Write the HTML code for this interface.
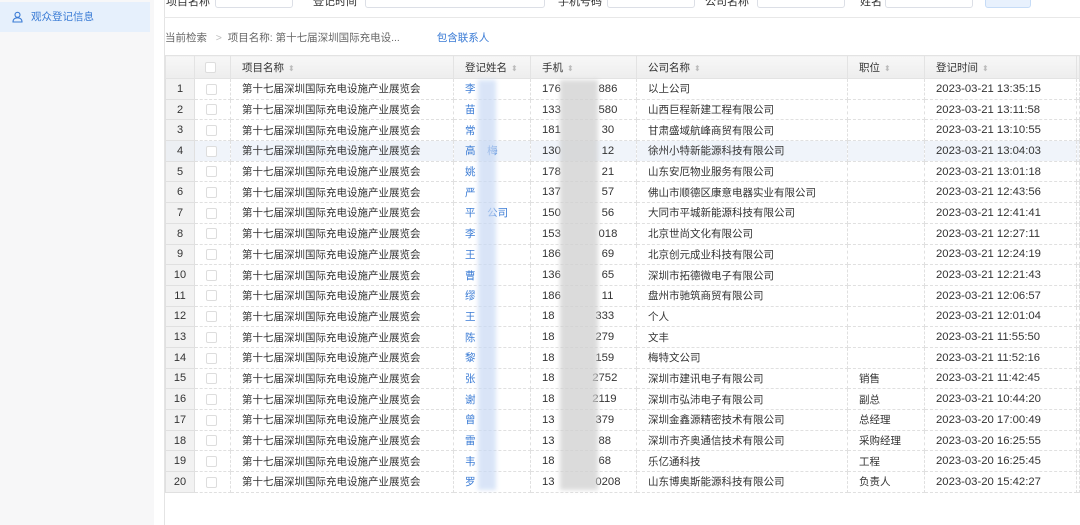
<!DOCTYPE html>
<html><head><meta charset="utf-8"><style>
*{margin:0;padding:0;box-sizing:border-box}
body{width:1080px;height:525px;overflow:hidden;background:#fff;font-family:"Liberation Sans","Noto Sans CJK SC",sans-serif;font-size:11px;color:#333;position:relative}
.side{position:absolute;left:0;top:0;width:154px;height:525px;background:#f7f7f8}
.act{position:absolute;left:0;top:2px;width:150px;height:30px;background:#e6f0fc;color:#3a7bd5;font-size:10.5px;line-height:30px;padding-left:31px}
.vl{position:absolute;left:164px;top:0;width:1px;height:525px;background:#e4e4e4}
.topline{position:absolute;left:164px;top:17px;width:916px;height:1px;background:#e8e8e8}
.inp{position:absolute;top:-8px;height:16px;border:1px solid #dcdfe6;border-radius:3px;background:#fff}
.lab{position:absolute;top:-7px;font-size:11px;color:#333}
.crumb{position:absolute;top:30px;left:165px;font-size:10.5px;color:#666}
table{position:absolute;left:165px;top:55px;border-collapse:collapse;table-layout:fixed;width:915px}
td,th{border:1px dashed #e0e0e0;height:20.7px;white-space:nowrap;overflow:hidden;font-weight:normal;text-align:left;padding-left:11px;font-size:10.5px}
th{height:23px;background:linear-gradient(#f7f7f7,#ededed);color:#333;border:1px solid #e3e3e3}
td.n{background:#f2f2f2;text-align:center;padding:0;border-style:solid;font-size:11px}
.cb{display:inline-block;width:11px;height:11px;border:1px solid #ddd;border-radius:2px;background:#fff;vertical-align:middle}
.s{color:#bbb;font-size:8px;margin-left:4px}
.b{color:#3a7bd5}
.d{font-size:11.3px}
tr.h td{background:#f0f4fa}
tr.h td.n{background:#eceff3}
.bl{position:absolute;background:#d0d0d0;opacity:.75;filter:blur(2px)}
.bb{position:absolute;background:#c9daf5;opacity:.7;filter:blur(2px)}
</style></head><body>
<div class="side"><div class="act"><svg style="position:absolute;left:12px;top:9px" width="12" height="12" viewBox="0 0 12 12" fill="none" stroke="#3a7bd5" stroke-width="1.1"><circle cx="5.5" cy="3.8" r="2.5"/><path d="M1 11c0-2.8 2-4.2 4.5-4.2S10 8.2 10 11z"/></svg>观众登记信息</div></div>
<div class="vl"></div><div class="topline"></div>
<div class="lab" style="left:166px">项目名称</div><div class="inp" style="left:215px;width:78px"></div>
<div class="lab" style="left:313px">登记时间</div><div class="inp" style="left:365px;width:180px"></div>
<div class="lab" style="left:558px">手机号码</div><div class="inp" style="left:607px;width:88px"></div>
<div class="lab" style="left:705px">公司名称</div><div class="inp" style="left:757px;width:88px"></div>
<div class="lab" style="left:860px">姓名</div><div class="inp" style="left:885px;width:88px"></div>
<div class="inp" style="left:985px;width:46px;background:#e8f1fd;border-color:#c6dcf7"></div>
<div class="crumb">当前检索 &nbsp;&nbsp;<span style="color:#bbb">&gt;</span>&nbsp;&nbsp;项目名称: 第十七届深圳国际充电设... <span class="b" style="margin-left:34px">包含联系人</span></div>
<table>
<colgroup><col style="width:29px"><col style="width:36px"><col style="width:223px"><col style="width:77px"><col style="width:106px"><col style="width:211px"><col style="width:77px"><col style="width:152px"><col></colgroup>
<tr><th style="border-right:none"></th><th style="padding-left:10px"><span class="cb"></span></th><th>项目名称<span class="s">⬍</span></th><th>登记姓名<span class="s">⬍</span></th><th>手机<span class="s">⬍</span></th><th>公司名称<span class="s">⬍</span></th><th>职位<span class="s">⬍</span></th><th>登记时间<span class="s">⬍</span></th><th></th></tr>
<tr><td class="n">1</td><td><span class="cb"></span></td><td>第十七届深圳国际充电设施产业展览会</td><td class="b">李</td><td class="d">176&nbsp;&nbsp;&nbsp;&nbsp;&nbsp;&nbsp;&nbsp;&nbsp;&nbsp;&nbsp;&nbsp;&nbsp;886</td><td>以上公司</td><td></td><td class="d">2023-03-21 13:35:15</td><td></td></tr>
<tr><td class="n">2</td><td><span class="cb"></span></td><td>第十七届深圳国际充电设施产业展览会</td><td class="b">苗</td><td class="d">133&nbsp;&nbsp;&nbsp;&nbsp;&nbsp;&nbsp;&nbsp;&nbsp;&nbsp;&nbsp;&nbsp;&nbsp;580</td><td>山西巨程新建工程有限公司</td><td></td><td class="d">2023-03-21 13:11:58</td><td></td></tr>
<tr><td class="n">3</td><td><span class="cb"></span></td><td>第十七届深圳国际充电设施产业展览会</td><td class="b">常</td><td class="d">181&nbsp;&nbsp;&nbsp;&nbsp;&nbsp;&nbsp;&nbsp;&nbsp;&nbsp;&nbsp;&nbsp;&nbsp;&nbsp;30</td><td>甘肃盛域航峰商贸有限公司</td><td></td><td class="d">2023-03-21 13:10:55</td><td></td></tr>
<tr class="h"><td class="n">4</td><td><span class="cb"></span></td><td>第十七届深圳国际充电设施产业展览会</td><td class="b">高&nbsp;&nbsp;&nbsp;&nbsp;梅</td><td class="d">130&nbsp;&nbsp;&nbsp;&nbsp;&nbsp;&nbsp;&nbsp;&nbsp;&nbsp;&nbsp;&nbsp;&nbsp;&nbsp;12</td><td>徐州小特新能源科技有限公司</td><td></td><td class="d">2023-03-21 13:04:03</td><td></td></tr>
<tr><td class="n">5</td><td><span class="cb"></span></td><td>第十七届深圳国际充电设施产业展览会</td><td class="b">姚</td><td class="d">178&nbsp;&nbsp;&nbsp;&nbsp;&nbsp;&nbsp;&nbsp;&nbsp;&nbsp;&nbsp;&nbsp;&nbsp;&nbsp;21</td><td>山东安厄物业服务有限公司</td><td></td><td class="d">2023-03-21 13:01:18</td><td></td></tr>
<tr><td class="n">6</td><td><span class="cb"></span></td><td>第十七届深圳国际充电设施产业展览会</td><td class="b">严</td><td class="d">137&nbsp;&nbsp;&nbsp;&nbsp;&nbsp;&nbsp;&nbsp;&nbsp;&nbsp;&nbsp;&nbsp;&nbsp;&nbsp;57</td><td>佛山市顺德区康意电器实业有限公司</td><td></td><td class="d">2023-03-21 12:43:56</td><td></td></tr>
<tr><td class="n">7</td><td><span class="cb"></span></td><td>第十七届深圳国际充电设施产业展览会</td><td class="b">平&nbsp;&nbsp;&nbsp;&nbsp;公司</td><td class="d">150&nbsp;&nbsp;&nbsp;&nbsp;&nbsp;&nbsp;&nbsp;&nbsp;&nbsp;&nbsp;&nbsp;&nbsp;&nbsp;56</td><td>大同市平城新能源科技有限公司</td><td></td><td class="d">2023-03-21 12:41:41</td><td></td></tr>
<tr><td class="n">8</td><td><span class="cb"></span></td><td>第十七届深圳国际充电设施产业展览会</td><td class="b">李</td><td class="d">153&nbsp;&nbsp;&nbsp;&nbsp;&nbsp;&nbsp;&nbsp;&nbsp;&nbsp;&nbsp;&nbsp;&nbsp;018</td><td>北京世尚文化有限公司</td><td></td><td class="d">2023-03-21 12:27:11</td><td></td></tr>
<tr><td class="n">9</td><td><span class="cb"></span></td><td>第十七届深圳国际充电设施产业展览会</td><td class="b">王</td><td class="d">186&nbsp;&nbsp;&nbsp;&nbsp;&nbsp;&nbsp;&nbsp;&nbsp;&nbsp;&nbsp;&nbsp;&nbsp;&nbsp;69</td><td>北京创元成业科技有限公司</td><td></td><td class="d">2023-03-21 12:24:19</td><td></td></tr>
<tr><td class="n">10</td><td><span class="cb"></span></td><td>第十七届深圳国际充电设施产业展览会</td><td class="b">曹</td><td class="d">136&nbsp;&nbsp;&nbsp;&nbsp;&nbsp;&nbsp;&nbsp;&nbsp;&nbsp;&nbsp;&nbsp;&nbsp;&nbsp;65</td><td>深圳市拓德微电子有限公司</td><td></td><td class="d">2023-03-21 12:21:43</td><td></td></tr>
<tr><td class="n">11</td><td><span class="cb"></span></td><td>第十七届深圳国际充电设施产业展览会</td><td class="b">缪</td><td class="d">186&nbsp;&nbsp;&nbsp;&nbsp;&nbsp;&nbsp;&nbsp;&nbsp;&nbsp;&nbsp;&nbsp;&nbsp;&nbsp;11</td><td>盘州市驰筑商贸有限公司</td><td></td><td class="d">2023-03-21 12:06:57</td><td></td></tr>
<tr><td class="n">12</td><td><span class="cb"></span></td><td>第十七届深圳国际充电设施产业展览会</td><td class="b">王</td><td class="d">18&nbsp;&nbsp;&nbsp;&nbsp;&nbsp;&nbsp;&nbsp;&nbsp;&nbsp;&nbsp;&nbsp;&nbsp;&nbsp;333</td><td>个人</td><td></td><td class="d">2023-03-21 12:01:04</td><td></td></tr>
<tr><td class="n">13</td><td><span class="cb"></span></td><td>第十七届深圳国际充电设施产业展览会</td><td class="b">陈</td><td class="d">18&nbsp;&nbsp;&nbsp;&nbsp;&nbsp;&nbsp;&nbsp;&nbsp;&nbsp;&nbsp;&nbsp;&nbsp;&nbsp;279</td><td>文丰</td><td></td><td class="d">2023-03-21 11:55:50</td><td></td></tr>
<tr><td class="n">14</td><td><span class="cb"></span></td><td>第十七届深圳国际充电设施产业展览会</td><td class="b">黎</td><td class="d">18&nbsp;&nbsp;&nbsp;&nbsp;&nbsp;&nbsp;&nbsp;&nbsp;&nbsp;&nbsp;&nbsp;&nbsp;&nbsp;159</td><td>梅特文公司</td><td></td><td class="d">2023-03-21 11:52:16</td><td></td></tr>
<tr><td class="n">15</td><td><span class="cb"></span></td><td>第十七届深圳国际充电设施产业展览会</td><td class="b">张</td><td class="d">18&nbsp;&nbsp;&nbsp;&nbsp;&nbsp;&nbsp;&nbsp;&nbsp;&nbsp;&nbsp;&nbsp;&nbsp;2752</td><td>深圳市建讯电子有限公司</td><td>销售</td><td class="d">2023-03-21 11:42:45</td><td></td></tr>
<tr><td class="n">16</td><td><span class="cb"></span></td><td>第十七届深圳国际充电设施产业展览会</td><td class="b">谢</td><td class="d">18&nbsp;&nbsp;&nbsp;&nbsp;&nbsp;&nbsp;&nbsp;&nbsp;&nbsp;&nbsp;&nbsp;&nbsp;2119</td><td>深圳市弘沛电子有限公司</td><td>副总</td><td class="d">2023-03-21 10:44:20</td><td></td></tr>
<tr><td class="n">17</td><td><span class="cb"></span></td><td>第十七届深圳国际充电设施产业展览会</td><td class="b">曾</td><td class="d">13&nbsp;&nbsp;&nbsp;&nbsp;&nbsp;&nbsp;&nbsp;&nbsp;&nbsp;&nbsp;&nbsp;&nbsp;&nbsp;379</td><td>深圳金鑫源精密技术有限公司</td><td>总经理</td><td class="d">2023-03-20 17:00:49</td><td></td></tr>
<tr><td class="n">18</td><td><span class="cb"></span></td><td>第十七届深圳国际充电设施产业展览会</td><td class="b">雷</td><td class="d">13&nbsp;&nbsp;&nbsp;&nbsp;&nbsp;&nbsp;&nbsp;&nbsp;&nbsp;&nbsp;&nbsp;&nbsp;&nbsp;&nbsp;88</td><td>深圳市齐奥通信技术有限公司</td><td>采购经理</td><td class="d">2023-03-20 16:25:55</td><td></td></tr>
<tr><td class="n">19</td><td><span class="cb"></span></td><td>第十七届深圳国际充电设施产业展览会</td><td class="b">韦</td><td class="d">18&nbsp;&nbsp;&nbsp;&nbsp;&nbsp;&nbsp;&nbsp;&nbsp;&nbsp;&nbsp;&nbsp;&nbsp;&nbsp;&nbsp;68</td><td>乐亿通科技</td><td>工程</td><td class="d">2023-03-20 16:25:45</td><td></td></tr>
<tr><td class="n">20</td><td><span class="cb"></span></td><td>第十七届深圳国际充电设施产业展览会</td><td class="b">罗</td><td class="d">13&nbsp;&nbsp;&nbsp;&nbsp;&nbsp;&nbsp;&nbsp;&nbsp;&nbsp;&nbsp;&nbsp;&nbsp;&nbsp;0208</td><td>山东博奥斯能源科技有限公司</td><td>负责人</td><td class="d">2023-03-20 15:42:27</td><td></td></tr>
</table>
<div class="bb" style="left:478px;top:80px;width:18px;height:410px"></div>
<div class="bl" style="left:560px;top:80px;width:38px;height:410px"></div>
</body></html>
